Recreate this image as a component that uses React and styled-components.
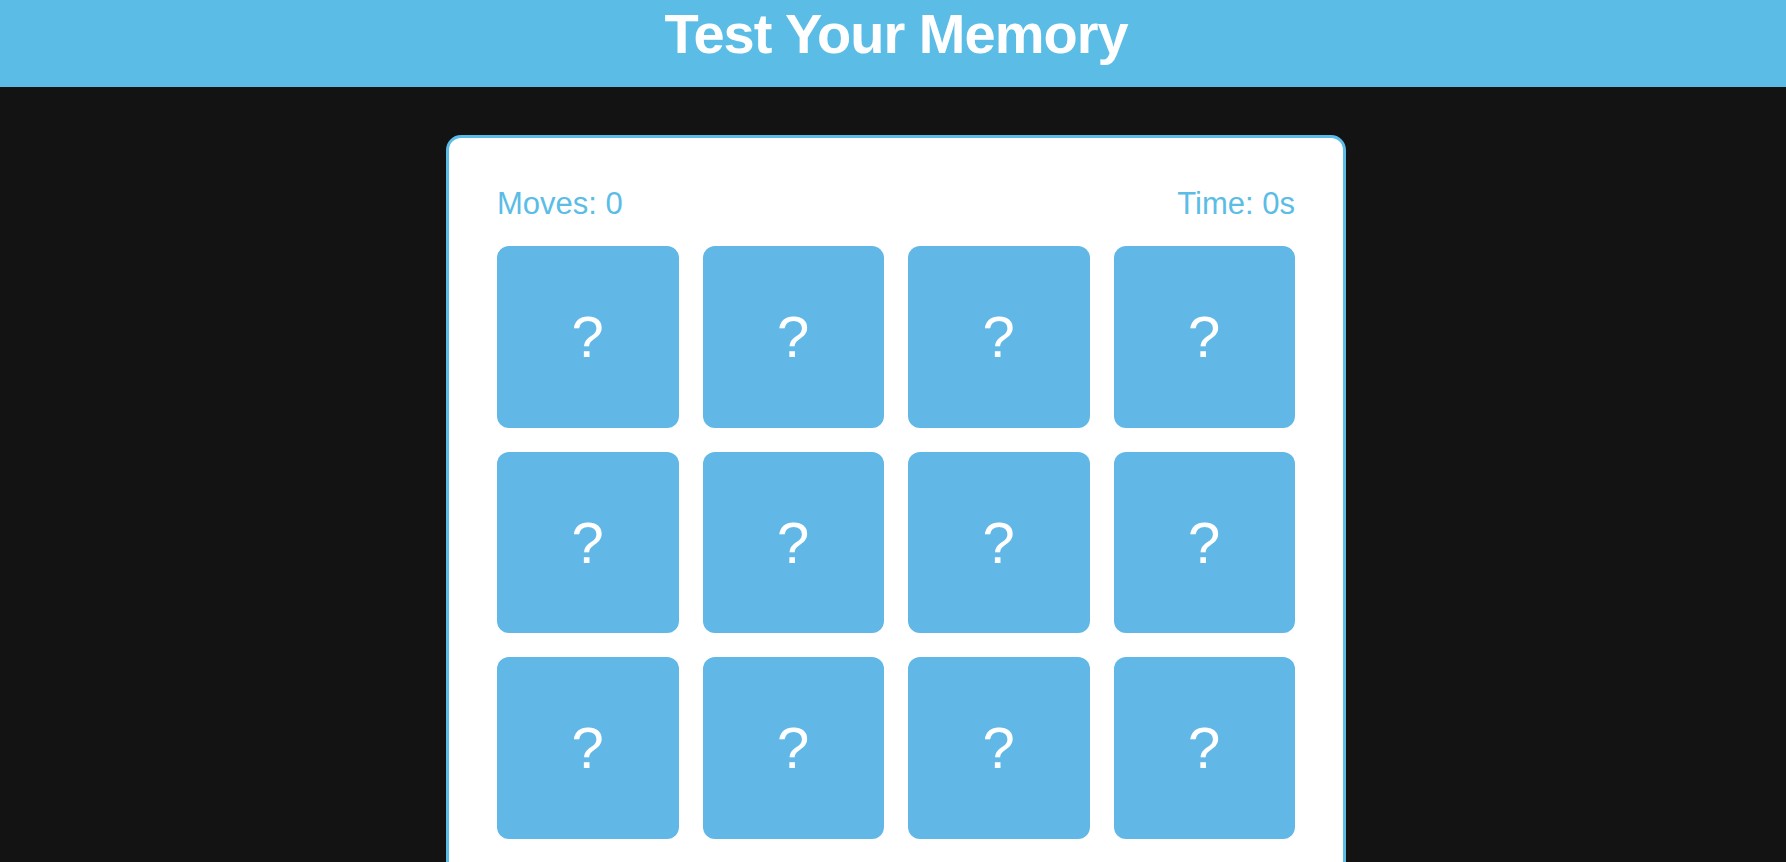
import React, {useState} from "react";
import styled, {createGlobalStyle} from 'styled-components';

const blue = '#5bbde6';
const tileBlue = '#61b8e6';

const GlobalStyle = createGlobalStyle`
  html, body {
    margin: 0;
    padding: 0;
    background: #131313;
    font-family: "Liberation Sans", Arial, sans-serif;
  }
`;

const Header = styled.header`
  box-sizing: border-box;
  height: 87px;
  padding: 1px 0 0 6px;
  background: ${blue};
  text-align: center;
`;

const Title = styled.h1`
  margin: 0;
  font-size: 56px;
  font-weight: bold;
  letter-spacing: -1px;
  color: #fff;
`;

const Main = styled.main`
  display: flex;
  justify-content: center;
  padding: 48px 0 48px 6px;
`;

const Board = styled.section`
  box-sizing: border-box;
  width: 900px;
  padding: 48px;
  background: #fff;
  border: 3px solid ${blue};
  border-radius: 15px;
`;

const Stats = styled.div`
  display: flex;
  justify-content: space-between;
  margin-bottom: 24px;
  font-size: 31px;
  color: ${blue};
`;

const Grid = styled.div`
  display: grid;
  grid-template-columns: repeat(4, 1fr);
  gap: 24px;
`;

const Tile = styled.button`
  aspect-ratio: 1;
  display: flex;
  align-items: center;
  justify-content: center;
  border: none;
  border-radius: 12px;
  background: ${props => props.flipped ? '#fff' : tileBlue};
  color: #fff;
  font-family: "Liberation Sans", Arial, sans-serif;
  font-size: 58px;
  cursor: pointer;
`;

const App = () => {
  const [moves] = useState(0);
  const [time] = useState(0);
  const tiles = Array.from({length: 12}, (_, i) => i);

  return (
    <>
      <GlobalStyle/>
      <Header>
        <Title>Test Your Memory</Title>
      </Header>
      <Main>
        <Board>
          <Stats>
            <span>Moves: {moves}</span>
            <span>Time: {time}s</span>
          </Stats>
          <Grid>
            {tiles.map(t => <Tile key={t}>?</Tile>)}
          </Grid>
        </Board>
      </Main>
    </>
  );
};

export default App;
